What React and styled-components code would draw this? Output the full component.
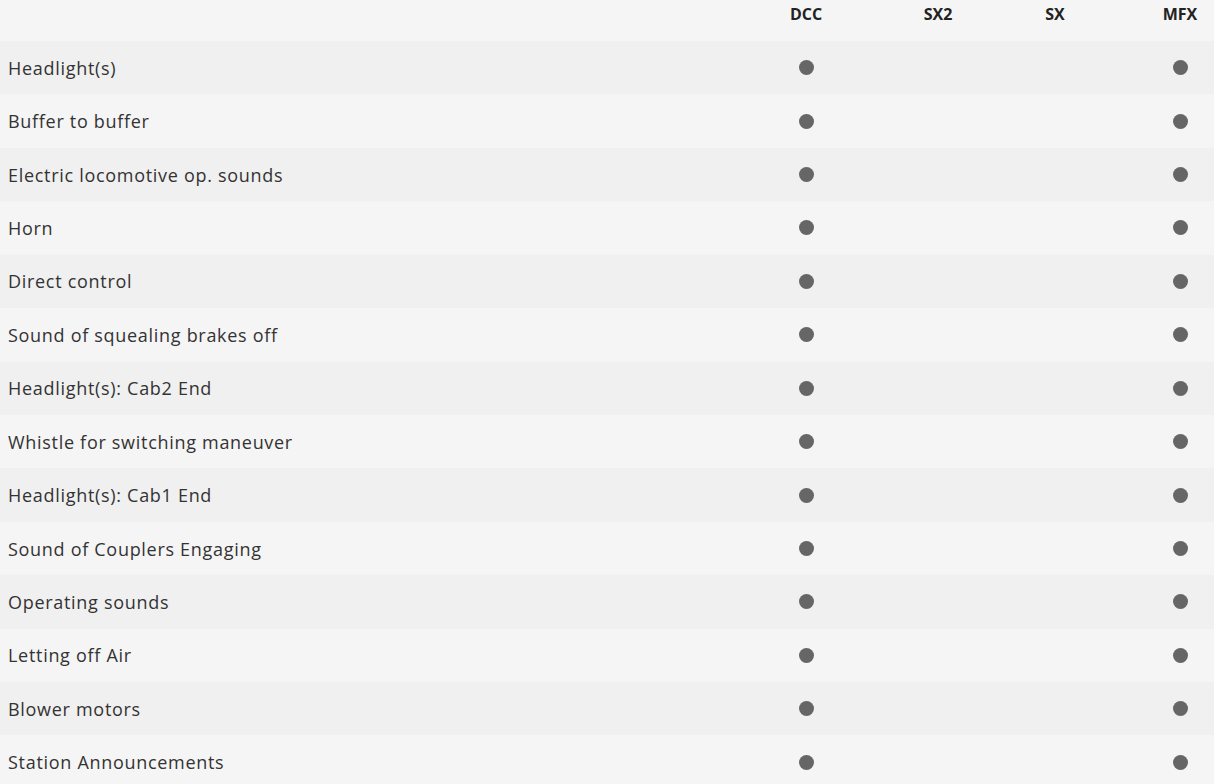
import React from "react";
import styled, { createGlobalStyle } from "styled-components";

const Global = createGlobalStyle`
  html, body { margin: 0; padding: 0; background: #f5f5f5; }
  body { font-family: "Open Sans", "Liberation Sans", sans-serif; color: #333; }
`;

const Table = styled.div`
  width: 1214px;
  display: grid;
  grid-template-columns: minmax(0, 1fr) 212px 52px 182px 68px;
`;

const Row = styled.div`
  display: contents;
  & > * {
    background: ${(p) => (p.$alt ? "#f0f0f0" : "#f5f5f5")};
    height: ${(p) => (p.$head ? "41px" : "53.43px")};
  }
`;

const HeadCell = styled.div`
  display: flex;
  align-items: flex-start;
  justify-content: center;
  padding-top: 3px;
  box-sizing: border-box;
  font-size: 16px;
  font-weight: 700;
  color: #222;
  line-height: 22px;
`;

const Label = styled.div`
  display: flex;
  align-items: center;
  padding-left: 8px;
  font-size: 18px;
  color: #333;
  letter-spacing: 0.7px;
`;

const Cell = styled.div`
  display: flex;
  align-items: center;
  justify-content: center;
`;

const Dot = styled.span`
  width: 15px;
  height: 15px;
  border-radius: 50%;
  background: #666;
  display: block;
`;

const cols = ["DCC", "SX2", "SX", "MFX"];
const rows = [
  "Headlight(s)",
  "Buffer to buffer",
  "Electric locomotive op. sounds",
  "Horn",
  "Direct control",
  "Sound of squealing brakes off",
  "Headlight(s): Cab2 End",
  "Whistle for switching maneuver",
  "Headlight(s): Cab1 End",
  "Sound of Couplers Engaging",
  "Operating sounds",
  "Letting off Air",
  "Blower motors",
  "Station Announcements",
];
const support = [true, false, false, true];

export default function App() {
  return (
    <>
      <Global />
      <Table>
        <Row $head>
          <HeadCell />
          {cols.map((c) => (
            <HeadCell key={c}>{c}</HeadCell>
          ))}
        </Row>
        {rows.map((r, i) => (
          <Row key={r} $alt={i % 2 === 0}>
            <Label>{r}</Label>
            {support.map((s, j) => (
              <Cell key={j}>{s && <Dot />}</Cell>
            ))}
          </Row>
        ))}
      </Table>
    </>
  );
}
